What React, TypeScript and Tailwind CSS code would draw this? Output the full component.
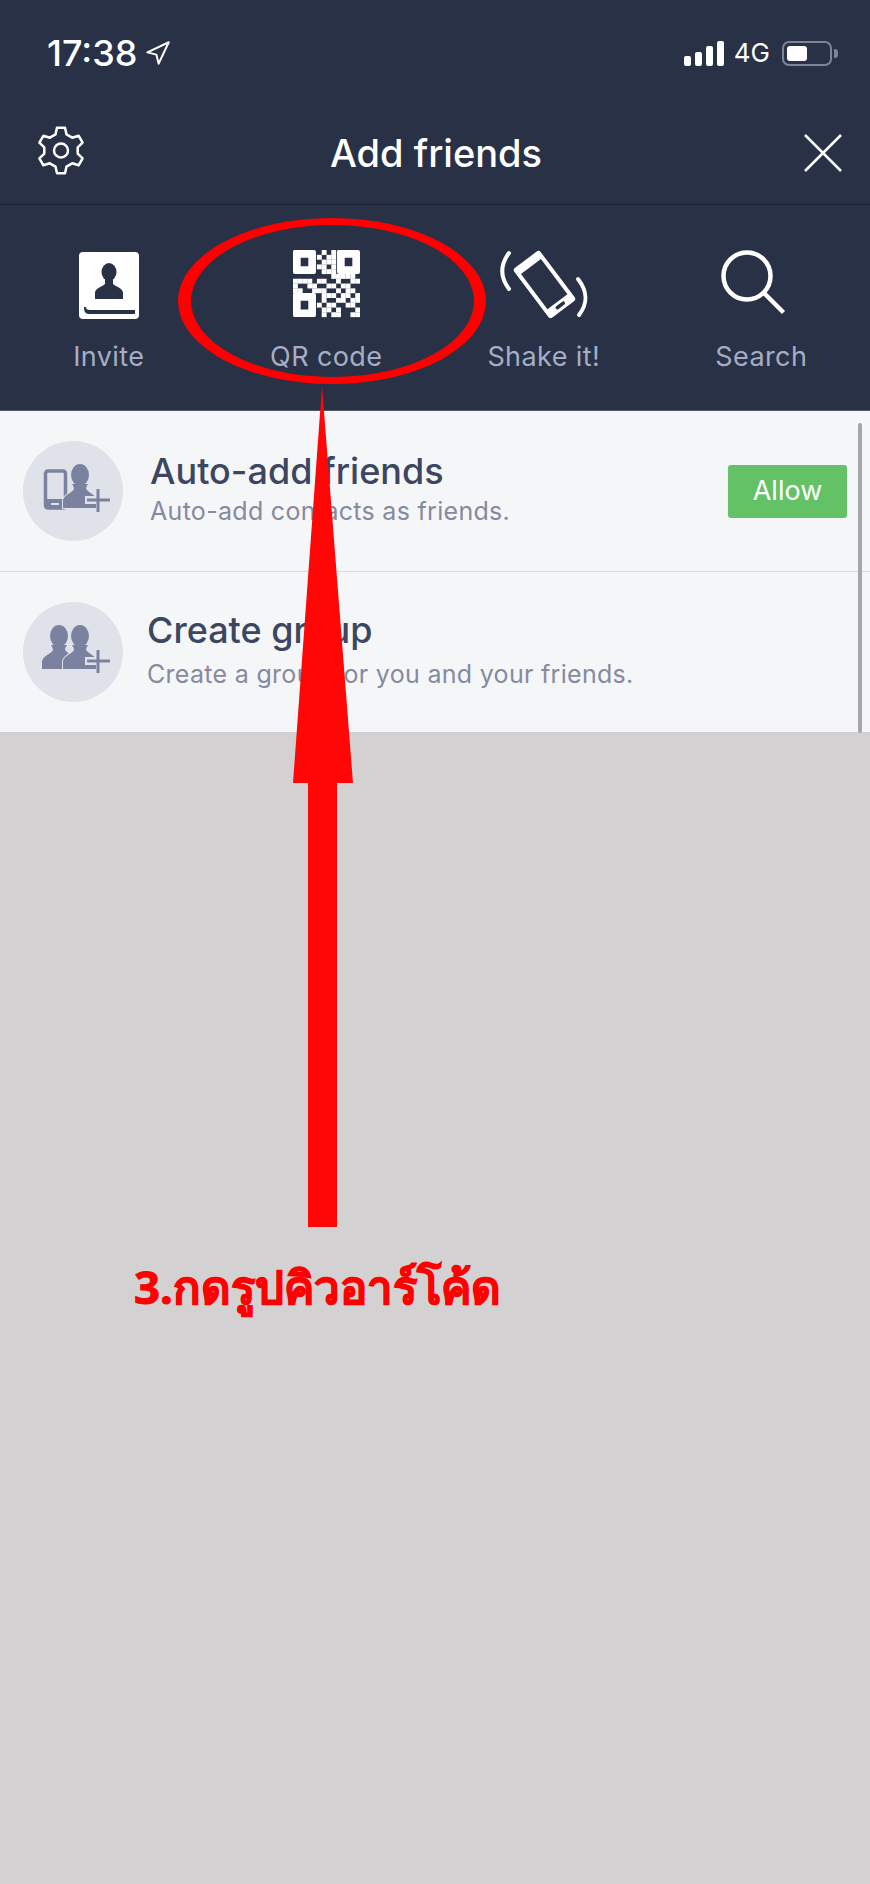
import React from 'react';
import { Navigation } from 'lucide-react';

const gearPath = () => {
    const pts: string[] = [];
    for (let t = 0; t < 6; t++) {
        const a = -90 + t * 60;
        [[-19, 17], [-10, 23], [10, 23], [19, 17]].forEach(([d, r]) => {
            const rad = ((a + d) * Math.PI) / 180;
            pts.push(`${(31 + r * Math.cos(rad)).toFixed(1)} ${(31 + r * Math.sin(rad)).toFixed(1)}`);
        });
    }
    return `M${pts.join('L')}Z`;
};

const Gear = () => (
    <svg width="62" height="62" viewBox="0 2.5 62 62" fill="none" stroke="white" strokeWidth="2.5" strokeLinejoin="round">
        <path d={gearPath()} />
        <circle cx="31" cy="31" r="7" />
    </svg>
);

const QR_ROWS = [
    '00000010100000',
    '00000101100000',
    '00000011100000',
    '00000110100000',
    '00000011100000',
    '00000000111110',
    '11110110010011',
    '10011001101100',
    '11001110010110',
    '00000011101101',
    '00000010011011',
    '00000101100110',
    '00000011010001',
    '00000010110011',
];

const QrIcon = () => (
    <svg width="67" height="69" viewBox="0 0 70 72" fill="white">
        {QR_ROWS.map((row, y) =>
            row.split('').map((c, x) =>
                c === '1' ? <rect key={`${x}-${y}`} x={x * 5} y={y * 5} width="5.1" height="5.1" /> : null
            )
        )}
        <path fillRule="evenodd" d="M1 0H22Q24 0 24 2V23Q24 25 22 25H2Q0 25 0 23V1ZM8 8V17H16V8Z" />
        <path fillRule="evenodd" d="M47 0H68Q70 0 70 2V23Q70 25 68 25H48Q46 25 46 23V1ZM54 8V17H62V8Z" />
        <path fillRule="evenodd" d="M1 45H22Q24 45 24 47V68Q24 70 22 70H2Q0 70 0 68V46ZM8 53V62H16V53Z" />
    </svg>
);

const InviteIcon = () => (
    <svg width="60" height="67" viewBox="0 0 60 67">
        <rect width="60" height="67" rx="4" fill="white" />
        <ellipse cx="30" cy="20" rx="7.5" ry="9" fill="#293147" />
        <path d="M16 47V41C16 36 23 35 26 32V26H34V32C37 35 44 36 44 41V47Z" fill="#293147" />
        <path d="M5 55H7C7 57 8 58 11 58H56V62H10C6 62 5 59 5 55Z" fill="#293147" />
    </svg>
);

const ShakeIcon = () => (
    <svg width="104" height="74" viewBox="0 4 104 74" fill="none" stroke="white" strokeLinecap="round">
        <path d="M17 12C8 24 8 36 17 48" strokeWidth="4" />
        <path d="M86 38C96 51 96 62 87 74" strokeWidth="4" />
        <g transform="rotate(-37 52.5 43.5)">
            <rect x="36" y="12.5" width="33" height="62" rx="3" fill="white" stroke="none" />
            <rect x="40" y="21" width="25" height="44" fill="#293147" stroke="none" />
            <rect x="47" y="68" width="11" height="3.5" rx="1.7" fill="#293147" stroke="none" />
        </g>
    </svg>
);

const SearchIcon = () => (
    <svg width="80" height="69" viewBox="0 0 80 69" fill="none" stroke="white">
        <circle cx="26" cy="26" r="23.5" strokeWidth="4.5" />
        <path d="M43 43L62.5 62.5" strokeWidth="4.5" />
    </svg>
);

const Person = ({ dx = 0 }: { dx?: number }) => (
    <g transform={`translate(${dx} 0)`} fill="#7a829f">
        <path
            d="M40 67V59C42 53 49 52 51 48C51 46 50 45 49 43H65C64 45 63 46 63 48C66 52 71 53 73 57V67Z"
            stroke="#e0e2ea"
            strokeWidth="2"
            paintOrder="stroke"
        />
        <ellipse cx="57" cy="34" rx="9" ry="11" />
    </g>
);

const PlusMark = () => (
    <>
        <rect x="62" y="55" width="14" height="8" fill="#e0e2ea" />
        <path d="M64 59H87M75 48V71" stroke="#7a829f" strokeWidth="3" fill="none" />
    </>
);

const AutoAddIcon = () => (
    <svg width="100" height="100" viewBox="0 0 100 100" className="shrink-0">
        <circle cx="50" cy="50" r="50" fill="#e0e2ea" />
        <rect x="22.5" y="30" width="20" height="37" rx="2.5" fill="none" stroke="#7a829f" strokeWidth="3.5" />
        <rect x="24" y="58" width="17" height="10" fill="#7a829f" />
        <rect x="28" y="62" width="8" height="2" fill="#e0e2ea" />
        <Person />
        <PlusMark />
    </svg>
);

const GroupIcon = () => (
    <svg width="100" height="100" viewBox="0 0 100 100" className="shrink-0">
        <circle cx="50" cy="50" r="50" fill="#e0e2ea" />
        <Person dx={-21} />
        <Person />
        <PlusMark />
    </svg>
);

const tabs = [
    { label: 'Invite', icon: <InviteIcon /> },
    { label: 'QR code', icon: <QrIcon /> },
    { label: 'Shake it!', icon: <ShakeIcon /> },
    { label: 'Search', icon: <SearchIcon /> },
];

// red annotation drawn on top of the screenshot
const Annotation = () => (
    <svg width="870" height="1300" viewBox="0 0 870 1300" className="absolute left-0 top-0 pointer-events-none">
        <path
            fillRule="evenodd"
            fill="#ff0000"
            d="M178 301A154 83 0 1 0 486 301A154 83 0 1 0 178 301ZM191 301A141.500 76 0 1 1 474 301A141.500 76 0 1 1 191 301Z"
        />
        <path d="M322 386L353 783H337V1227H308V783H293Z" fill="#ff0707" />
    </svg>
);

export default function App() {
    return (
        <div className="relative w-[870px] h-[1884px] overflow-hidden bg-[#d3d1d2] font-['Inter',sans-serif]">
            <div className="bg-[#293147] text-white">
                <div className="h-[106px] flex items-center justify-between pl-[47px] pr-[32px]">
                    <div className="flex items-center gap-[7px]">
                        <span className="text-[36px] leading-none font-medium">17:38</span>
                        <Navigation size={27} strokeWidth={1.8} />
                    </div>
                    <div className="flex items-center">
                        <div className="flex items-end gap-[4px] h-[25px]">
                            <div className="w-[7px] h-[10px] rounded-[2px] bg-white" />
                            <div className="w-[7px] h-[14px] rounded-[2px] bg-white" />
                            <div className="w-[7px] h-[20px] rounded-[2px] bg-white" />
                            <div className="w-[7px] h-[25px] rounded-[2px] bg-white" />
                        </div>
                        <span className="ml-[10px] text-[26px] leading-none">4G</span>
                        <div className="ml-[12px] w-[50px] h-[25px] rounded-[7px] border-2 border-[#7d8497] p-[3px]">
                            <div className="w-[20px] h-full rounded-[3px] bg-white" />
                        </div>
                        <div className="ml-[2px] w-[4px] h-[9px] rounded-r-[3px] bg-[#7d8497]" />
                    </div>
                </div>
                <div className="h-[99px] grid grid-cols-[1fr_auto_1fr] items-center pb-[4px] pl-[30px] pr-[28px] border-b border-[#1d2335]">
                    <Gear />
                    <h1 className="text-[38px] leading-none font-medium">Add friends</h1>
                    <svg className="justify-self-end" width="38" height="38" viewBox="0 0 38 38" stroke="white" strokeWidth="2.5">
                        <path d="M1 1L37 37M37 1L1 37" />
                    </svg>
                </div>
            </div>

            <div className="h-[206px] grid grid-cols-4 bg-[#293147] border-b border-[#4e5a6a]">
                {tabs.map((t) => (
                    <div key={t.label} className="flex flex-col items-center">
                        <div className="h-[114px] flex items-end justify-center">{t.icon}</div>
                        <span className="mt-[24px] text-[27px] leading-none text-[#a5aec4] tracking-[0.4px]">{t.label}</span>
                    </div>
                ))}
            </div>

            <div className="bg-[#f5f6f8]">
                <div className="h-[161px] flex items-center pl-[23px] pr-[23px] border-b border-[#d5dae3]">
                    <AutoAddIcon />
                    <div className="ml-[27px] flex-1 pb-[7px]">
                        <div className="text-[36px] leading-[44px] font-medium text-[#3c4660]">Auto-add friends</div>
                        <div className="mt-[3px] text-[25px] leading-[30px] text-[#868a9e] tracking-[0.3px]">Auto-add contacts as friends.</div>
                    </div>
                    <div className="w-[119px] h-[53px] flex items-center justify-center rounded-[3px] bg-[#63c266] text-white text-[27px]">
                        Allow
                    </div>
                </div>
                <div className="h-[161px] flex items-center pl-[23px] pr-[23px] border-b border-[#cfcfd2]">
                    <GroupIcon />
                    <div className="ml-[24px] flex-1 pb-[7px]">
                        <div className="text-[36px] leading-[44px] font-medium text-[#3c4660]">Create group</div>
                        <div className="mt-[7px] text-[25px] leading-[30px] text-[#868a9e] tracking-[0.3px]">Create a group for you and your friends.</div>
                    </div>
                </div>
            </div>

            <div className="absolute left-[858px] top-[423px] w-[4px] h-[310px] rounded-full bg-[#a5a6aa]" />
            <Annotation />
            <div className="absolute left-[134px] top-[1254px] text-[45.500px] leading-[64px] font-bold text-[#ff0000] whitespace-nowrap [-webkit-text-stroke:1px_#ff0000] font-['Noto_Sans','DejaVu_Sans','Noto_Sans_CJK_SC',sans-serif]">
                3.กดรูปคิวอาร์โค้ด
            </div>
        </div>
    );
}
